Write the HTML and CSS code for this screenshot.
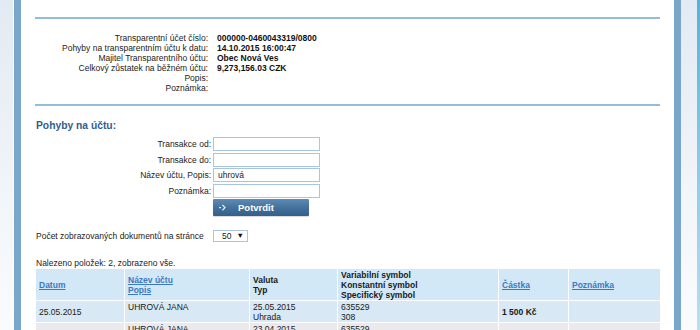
FILE: index.html
```html
<!DOCTYPE html>
<html lang="cs">
<head>
<meta charset="utf-8">
<title>Transparentní účet</title>
<link rel="stylesheet" href="styles.css">
</head>
<body>
<div class="page">
  <div class="side side-left"></div>
  <div class="bar"></div>
  <main class="main">
    <div class="rule"></div>
    <div class="info">
      <div class="lbl">Transparentní účet číslo:</div><div class="val">000000-0460043319/0800</div>
      <div class="lbl">Pohyby na transparentním účtu k datu:</div><div class="val">14.10.2015 16:00:47</div>
      <div class="lbl">Majitel Transparentního účtu:</div><div class="val">Obec Nová Ves</div>
      <div class="lbl">Celkový zůstatek na běžném účtu:</div><div class="val">9,273,156.03 CZK</div>
      <div class="lbl">Popis:</div><div class="val"></div>
      <div class="lbl">Poznámka:</div><div class="val"></div>
    </div>
    <div class="rule rule2"></div>
    <h2 class="heading">Pohyby na účtu:</h2>
    <form class="filter">
      <label class="flbl" for="od">Transakce od:</label><input class="inp" id="od" type="text">
      <label class="flbl" for="do">Transakce do:</label><input class="inp" id="do" type="text">
      <label class="flbl" for="naz">Název účtu, Popis:</label><input class="inp" id="naz" type="text" value="uhrová">
      <label class="flbl" for="pozn">Poznámka:</label><input class="inp" id="pozn" type="text">
      <span></span>
      <button class="btn" type="button"><svg class="btn-ico" width="8" height="7" viewBox="0 0 8 7"><rect x="0" y="3" width="2" height="1.2" fill="#dfe9f3"/><path d="M3.5 1 L6 3.6 L3.5 6.2" fill="none" stroke="#dfe9f3" stroke-width="1.3"/></svg><span>Potvrdit</span></button>
    </form>
    <div class="count">
      <span class="count-lbl">Počet zobrazovaných dokumentů na stránce</span>
      <div class="sel-wrap">
        <select class="sel"><option>50</option></select>
        <span class="sel-arrow">▼</span>
      </div>
    </div>
    <p class="found">Nalezeno položek: 2, zobrazeno vše.</p>
    <table class="grid">
      <colgroup>
        <col style="width:89px"><col style="width:125px"><col style="width:88px"><col style="width:161px"><col style="width:70px"><col style="width:92px">
      </colgroup>
      <thead>
        <tr>
          <th><a href="#">Datum</a></th>
          <th><a href="#">Název účtu</a><br><a href="#">Popis</a></th>
          <th>Valuta<br>Typ</th>
          <th>Variabilní symbol<br>Konstantní symbol<br>Specifický symbol</th>
          <th><a href="#">Částka</a></th>
          <th><a href="#">Poznámka</a></th>
        </tr>
      </thead>
      <tbody>
        <tr class="r1">
          <td class="mid">25.05.2015</td>
          <td>UHROVÁ JANA</td>
          <td>25.05.2015<br>Uhrada</td>
          <td>635529<br>308</td>
          <td class="mid b">1 500 Kč</td>
          <td></td>
        </tr>
        <tr class="r2">
          <td class="mid">23.04.2015</td>
          <td>UHROVÁ JANA</td>
          <td>23.04.2015<br>Uhrada</td>
          <td>635529<br>308</td>
          <td class="mid b">1 500 Kč</td>
          <td></td>
        </tr>
      </tbody>
    </table>
  </main>
  <div class="bar"></div>
  <div class="side side-right"></div>
  <div class="edge"></div>
</div>
</body>
</html>
```

FILE: styles.css
```css
html, body {
  margin: 0;
  padding: 0;
  height: 100%;
  overflow: hidden;
}
body {
  font-family: "Liberation Sans", Arial, sans-serif;
  font-size: 8.5px;
  line-height: 10px;
  color: #1a1a1a;
  background: #fff;
}
.page {
  display: flex;
  height: 330px;
}
.side {
  flex: none;
  background: linear-gradient(to bottom, #e2eaf3 0%, #f2f5f9 60%, #fafbfd 100%);
}
.side-left {
  width: 13px;
  border-right: 1px solid #fbfcfe;
}
.side-right {
  width: 16px;
}
.edge {
  flex: none;
  width: 3px;
  background: linear-gradient(to bottom, #5aafd9 0%, #8ccae9 50%, #b9def2 100%);
}
.bar {
  flex: none;
  width: 7px;
  background: #7aa6c9;
}
.main {
  flex: 1;
  padding: 17px 14px 0 14px;
  min-width: 0;
}
.rule {
  height: 2px;
  background: #92bedc;
}
.rule2 {
  margin-top: 11px;
}
.info {
  display: grid;
  grid-template-columns: 173px auto;
  column-gap: 9px;
  margin-top: 14px;
}
.lbl {
  text-align: right;
  color: #222;
}
.val {
  font-weight: bold;
  color: #111;
  min-height: 10px;
}
.heading {
  margin: 14px 0 0 1px;
  font-size: 10.3px;
  line-height: 12px;
  font-weight: bold;
  color: #2f5e8e;
}
.filter {
  display: grid;
  grid-template-columns: 176px 107px;
  column-gap: 2px;
  row-gap: 1.5px;
  margin-top: 5px;
  align-items: center;
}
.flbl {
  text-align: right;
  color: #222;
}
.inp {
  box-sizing: border-box;
  width: 107px;
  height: 14px;
  margin: 0;
  padding: 0 0 0 4px;
  border: 1px solid #a8c6de;
  background: #fff;
  font-family: "Liberation Sans", Arial, sans-serif;
  font-size: 8.5px;
  color: #222;
  outline: none;
}
.btn {
  box-sizing: border-box;
  width: 96px;
  height: 17px;
  margin: 0;
  padding: 0 0 0 6px;
  border: 0;
  border-radius: 1px;
  background: linear-gradient(to bottom, #5d8bb4 0%, #44729c 50%, #335f8a 100%);
  color: #fff;
  display: flex;
  align-items: center;
  font-family: "Liberation Sans", Arial, sans-serif;
  font-size: 9.5px;
  font-weight: bold;
  box-shadow: 0 1px 1px rgba(0,0,0,0.15);
}
.btn-ico {
  margin-right: 11px;
}
.count {
  display: flex;
  align-items: center;
  margin-top: 14px;
  height: 12px;
}
.count-lbl {
  width: 178px;
  padding-left: 1px;
  box-sizing: border-box;
}
.sel-wrap {
  position: relative;
  width: 35px;
  height: 12px;
}
.sel {
  appearance: none;
  -webkit-appearance: none;
  box-sizing: border-box;
  width: 35px;
  height: 12px;
  margin: 0;
  padding: 0 0 0 8px;
  border: 1px solid #a8c6de;
  background: #fff;
  font-family: "Liberation Sans", Arial, sans-serif;
  font-size: 8.5px;
  line-height: 10px;
  color: #222;
}
.sel-arrow {
  position: absolute;
  right: 4px;
  top: 1px;
  font-size: 7.5px;
  line-height: 10px;
  color: #111;
}
.found {
  margin: 16px 0 0 1px;
  color: #222;
}
.grid {
  width: 625px;
  table-layout: fixed;
  border-collapse: collapse;
}
.grid th, .grid td {
  border: 1px solid #fff;
  padding: 1px 3px 0 3px;
  text-align: left;
  vertical-align: top;
  line-height: 10px;
}
.grid th {
  background: #d2e8f7;
  vertical-align: middle;
  height: 30px;
  font-weight: bold;
}
.grid td.b {
  font-weight: bold;
}
.grid a {
  color: #3b79c3;
  text-decoration: underline;
}
.grid td {
  height: 20px;
  color: #1a1a1a;
}
.grid td.mid {
  vertical-align: middle;
}
.r1 td {
  background: #d8e8f4;
}
.r2 td {
  background: #eae9ee;
}
```
